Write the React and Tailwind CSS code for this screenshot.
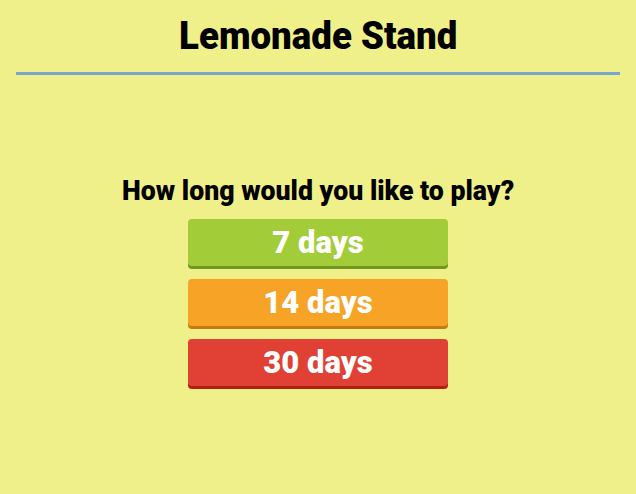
const OPTIONS = [
  { label: '7 days', bg: 'bg-[#a3cc39]', shadow: 'shadow-[0_3px_0_#72961f]' },
  { label: '14 days', bg: 'bg-[#f7a325]', shadow: 'shadow-[0_3px_0_#c57a12]' },
  { label: '30 days', bg: 'bg-[#e14035]', shadow: 'shadow-[0_3px_0_#b01f15]' },
];

export default function App() {
  return (
    <div className="min-h-[494px] bg-[#eff08a] font-['Roboto',sans-serif]">
      <header className="mx-4 border-b-[3px] border-[#79a6cf] pt-[14px] pb-[14px] text-center">
        <h1 className="inline-block origin-center scale-x-[0.965] text-[38px] font-black leading-[44px] text-black">Lemonade Stand</h1>
      </header>
      <main className="flex flex-col items-center pt-[100px]">
        <h2 className="scale-x-[0.97] text-[27.5px] font-black leading-[32px] text-black whitespace-nowrap">How long would you like to play?</h2>
        <div className="mt-[12px] flex flex-col gap-[13px]">
          {OPTIONS.map(o => (
            <button key={o.label} className={`h-[47px] w-[260px] rounded-[4px] ${o.bg} ${o.shadow} text-[31px] font-black leading-none text-white`}>
              <span className="inline-block">{o.label}</span>
            </button>
          ))}
        </div>
      </main>
    </div>
  );
}
